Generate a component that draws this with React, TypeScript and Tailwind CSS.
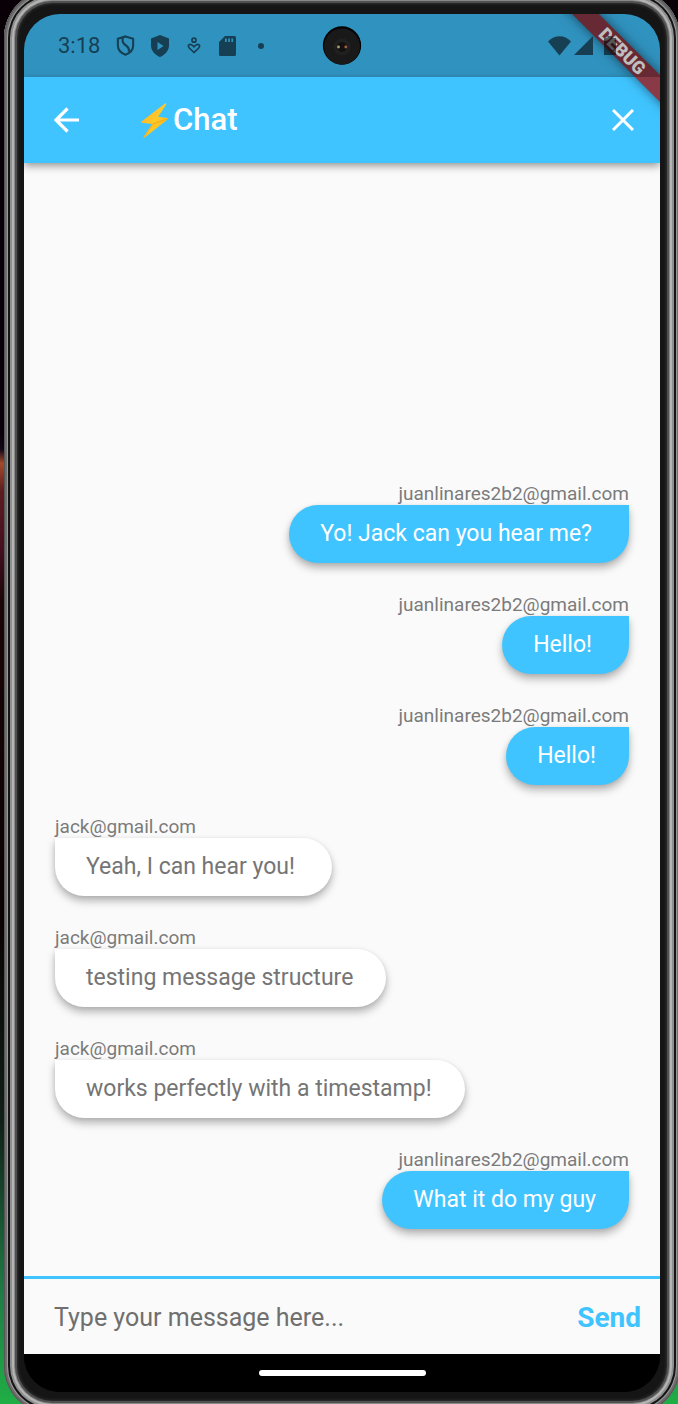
import type { ReactNode } from "react";

type Message = { id: number; sender: string; text: string; mine: boolean; extra?: boolean };

const ME = "juanlinares2b2@gmail.com";
const JACK = "jack@gmail.com";

const messages: Message[] = [
  { id: 1, sender: ME, text: "Yo! Jack can you hear me?", mine: true, extra: true },
  { id: 2, sender: ME, text: "Hello!", mine: true, extra: true },
  { id: 3, sender: ME, text: "Hello!", mine: true },
  { id: 4, sender: JACK, text: "Yeah, I can hear you!", mine: false, extra: true },
  { id: 5, sender: JACK, text: "testing message structure", mine: false },
  { id: 6, sender: JACK, text: "works perfectly with a timestamp!", mine: false },
  { id: 7, sender: ME, text: "What it do my guy", mine: true },
];

function PhoneFrame({ children }: { children: ReactNode }) {
  return (
    <div className="flex h-screen min-h-[720px] overflow-hidden bg-[linear-gradient(to_bottom,#080006_0%,#08000a_31%,#120618_32%,#a24a2a_33%,#5c1c20_35%,#451020_39%,#1a0508_43%,#0a0203_65%,#102018_80%,#1f7a45_92%,#1fae45_100%)] pl-1 font-[Roboto,sans-serif]">
      <div className="-mt-[10px] -mr-0.5 -mb-[10px] flex min-w-0 flex-1 rounded-[48px] bg-[#151515] px-5 pt-6 pb-[22px] shadow-[inset_0_0_0_1px_#555555,inset_0_0_0_3px_#6e6e6e,inset_0_0_0_4px_#999999,inset_0_0_0_6px_#151515,inset_0_0_0_8px_#8f8f8f,inset_0_0_0_10px_#b4b4b4,inset_0_0_0_11px_#888888,inset_0_0_0_13px_#505050,inset_0_0_3px_14px_#303030]">
        <div className="relative flex min-w-0 flex-1 flex-col overflow-hidden rounded-[36px] bg-black">{children}</div>
      </div>
    </div>
  );
}

function StatusBar() {
  return (
    <div className="shrink-0 bg-[#40c4ff]">
      <div className="relative z-20 flex h-[63px] items-center bg-black/25 pr-[44px] pl-[34px] text-[#163f53]">
        <span className="text-[22px] leading-none">3:18</span>
        <svg className="ml-[15px] size-[21px]" viewBox="0 0 20 22" fill="none" stroke="currentColor" strokeWidth="2.200">
          <path d="M10 1.500 18 4v7c0 4.500-3.500 8-8 9.700C5.500 19 2 15.500 2 11V4Z" />
          <path d="M7 2.500v3.500c0 2.500 1.500 3.700 3.500 5s3.500 3 3 6.500" />
        </svg>
        <svg className="ml-[13px] size-[22px]" viewBox="0 0 20 22" fill="currentColor">
          <path fillRule="evenodd" d="m10 0 9 3.500v7c0 5-4 9.500-9 11.500-5-2-9-6.500-9-11.500v-7ZM7.500 7v8l6-4Z" />
        </svg>
        <svg className="ml-[16px] h-[17px] w-[14px]" viewBox="0 0 14 17" fill="none" stroke="currentColor" strokeWidth="1.700">
          <circle cx="7" cy="3.200" r="2" />
          <path d="M7 15.500 2.300 11C.5 9 1.500 7.300 3.300 7.300c1.700 0 2.500 1 3.700 2.500 1.200-1.500 2-2.500 3.700-2.500 1.800 0 2.800 1.700 1 3.700Z" />
        </svg>
        <svg className="ml-[18px] h-[20px] w-[17px]" viewBox="0 0 17 20" fill="currentColor">
          <path fillRule="evenodd" d="M6 0h9.500Q17 0 17 1.500v17q0 1.500-1.500 1.500h-14Q0 20 0 18.500V6ZM6 2.500V6h1.700V2.500Zm3.200 0V6h1.700V2.500Zm3.200 0V6h1.700V2.500Z" />
        </svg>
        <span className="ml-[22px] size-[6px] rounded-full bg-current" />
        <svg className="ml-auto h-[20px] w-[23px]" viewBox="0 0 23 20" fill="currentColor">
          <path d="M11.500 19.500 0 5.500C6.500-1.500 16.500-1.500 23 5.500Z" />
        </svg>
        <svg className="ml-[3px] size-[19px]" viewBox="0 0 19 19" fill="currentColor">
          <path d="M19 0v19H0Z" />
        </svg>
        <svg className="ml-[11px] h-[19px] w-[12px] text-black/55" viewBox="0 0 12 19" fill="currentColor">
          <path d="M3.500 0h5v2H12v17H0V2h3.500Z" />
        </svg>
        <svg className="absolute top-3 left-1/2 size-[39px] -translate-x-1/2" viewBox="0 0 39 39">
          <circle cx="19.500" cy="19.500" r="19.200" fill="#030303" />
          <circle cx="19.500" cy="20.500" r="18" fill="#191919" />
          <circle cx="19.500" cy="21" r="8.500" fill="#202020" />
          <circle cx="19.500" cy="21" r="5" fill="#151010" />
          <circle cx="16" cy="21" r="1.400" fill="#a8a172" />
          <circle cx="23.300" cy="21" r="1.400" fill="#a5604c" />
        </svg>
      </div>
    </div>
  );
}

function AppBar() {
  return (
    <header className="relative flex h-[86px] shrink-0 items-center bg-[#40c4ff] pr-[26px] pl-[30px] text-white shadow-[0_3px_8px_rgba(0,0,0,0.4)]">
      <button type="button" aria-label="Back" className="shrink-0">
        <svg className="h-[26px] w-[25px]" viewBox="0 0 25 26" fill="none" stroke="currentColor" strokeWidth="3.200">
          <path d="M25 13H2.500M13.500 1.500 2 13l11.500 11.500" />
        </svg>
      </button>
      <h1 className="ml-[60px] flex flex-1 items-center text-[31px] leading-9 font-medium">
        <svg className="mr-0.5 h-[36px] w-[32px]" viewBox="0 0 32 36" aria-hidden="true">
          <defs>
            <linearGradient id="bolt" x1="0" y1="0" x2="1" y2="1">
              <stop offset="0" stopColor="#ffa726" />
              <stop offset="0.5" stopColor="#ffca28" />
              <stop offset="1" stopColor="#fbb416" />
            </linearGradient>
          </defs>
          <path d="M26 1.500 2.500 19.500c-.6.600-.3 1.200.4 1.300l10.200 1.200L4.800 34.500c-.4.900.5 1.200 1.200.7L28.500 17.500c.6-.6.400-1.300-.4-1.400l-9-1.300L27.200 2.500c.4-.9-.5-1.500-1.200-1Z" fill="url(#bolt)" />
          <path d="M28.300 17 14 22 5.500 34.800" fill="none" stroke="#f39a1c" strokeWidth="1.200" opacity=".6" />
        </svg>
        Chat
      </h1>
      <button type="button" aria-label="Close chat" className="shrink-0">
        <svg className="size-[22px]" viewBox="0 0 22 22" fill="none" stroke="currentColor" strokeWidth="3">
          <path d="m1 1 20 20M21 1 1 21" />
        </svg>
      </button>
    </header>
  );
}

function Bubble({ message }: { message: Message }) {
  const { mine, extra, sender, text } = message;
  return (
    <li className={mine ? "flex flex-col items-end" : "flex flex-col items-start"}>
      <span className="text-[19px] leading-[22px] text-[#7b7b7b]">{sender}</span>
      <p
        className={[
          "rounded-[29px] py-[15px] pl-[31px] text-[23px] leading-7 shadow-[0_5px_8px_rgba(0,0,0,0.28),0_1px_4px_rgba(0,0,0,0.08)]",
          mine ? "rounded-tr-none bg-[#40c4ff] text-white" : "rounded-tl-none bg-white text-[#757575]",
          extra ? "pr-[37px]" : "pr-[33px]",
        ].join(" ")}
      >
        {text}
      </p>
    </li>
  );
}

function DebugBanner() {
  return (
    <div className="pointer-events-none absolute top-0 right-0 z-10 size-[110px] overflow-hidden">
      <div className="absolute top-[26px] -right-[41px] flex h-[19px] w-[160px] rotate-45 items-center justify-center bg-[#8a3947] pl-1 text-[18px] leading-none font-black text-white shadow-[0_0_12px_rgba(0,0,0,0.5)]">
        DEBUG
      </div>
    </div>
  );
}

export default function App() {
  return (
    <PhoneFrame>
      <StatusBar />
      <main className="flex min-h-0 flex-1 flex-col bg-[#fafafa]">
        <AppBar />
        <ul className="flex min-h-0 flex-1 flex-col justify-end gap-[31px] overflow-hidden px-[31px] pb-[47px]">
          {messages.map((m) => (
            <Bubble key={m.id} message={m} />
          ))}
        </ul>
        <form className="flex h-[78px] shrink-0 items-center border-t-[3px] border-[#40c4ff] pt-0.5 pr-[19px] pl-[30px]" onSubmit={(e) => e.preventDefault()}>
          <input
            type="text"
            aria-label="Message"
            placeholder="Type your message here..."
            className="min-w-0 flex-1 bg-transparent text-[25px] leading-8 text-[#333333] outline-none placeholder:text-[#6f6f6f]"
          />
          <button type="submit" className="text-[28px] leading-8 font-bold text-[#40c4ff]">
            Send
          </button>
        </form>
      </main>
      <div className="flex h-[38px] shrink-0 items-center justify-center bg-black">
        <div className="h-[6px] w-[167px] rounded-full bg-white" />
      </div>
      <DebugBanner />
    </PhoneFrame>
  );
}
